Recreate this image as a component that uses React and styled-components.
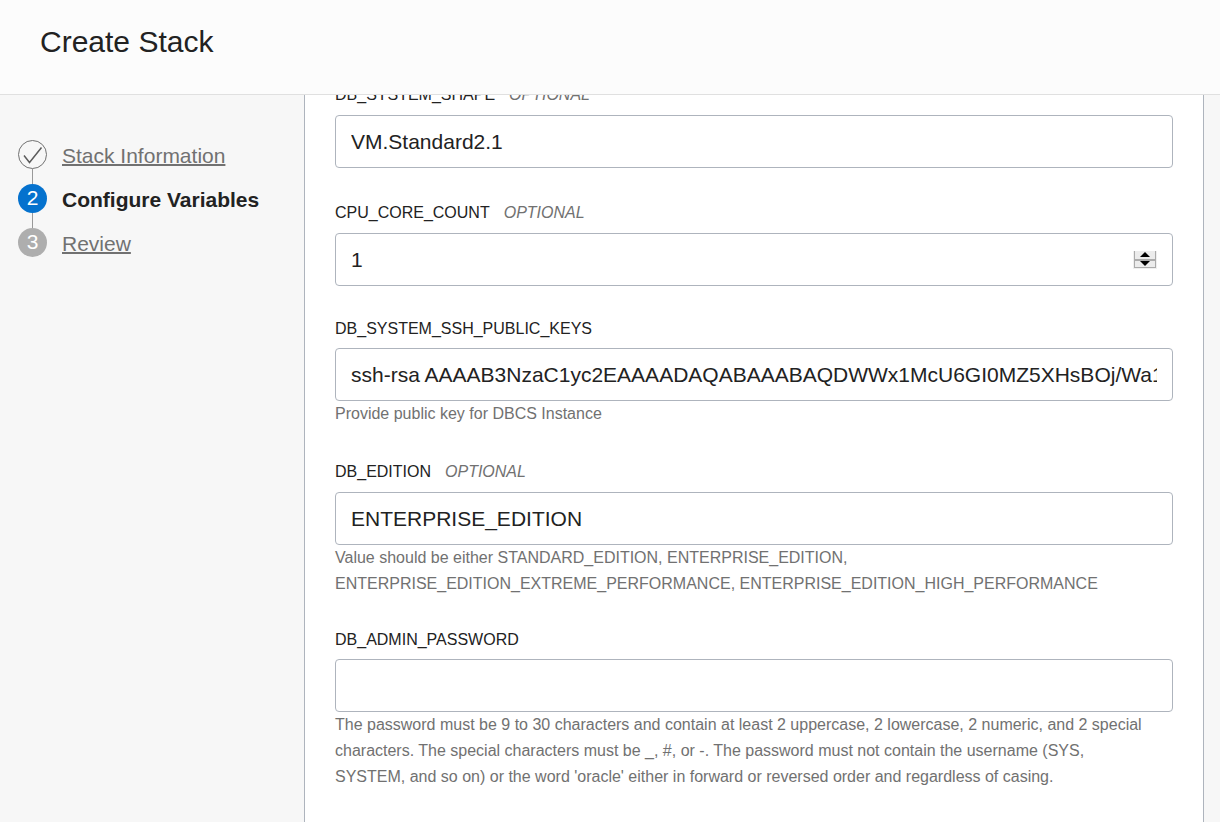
import React, { useLayoutEffect, useRef, useState } from "react";
import styled, { createGlobalStyle, css } from "styled-components";

const Global = createGlobalStyle`
  * { box-sizing: border-box; }
  body {
    margin: 0;
    background: #f7f7f7;
    color: #222222;
    font-family: "Liberation Sans", Arial, sans-serif;
  }
`;

const Shell = styled.div`
  height: 100vh;
  display: flex;
  flex-direction: column;
`;

const Header = styled.header`
  flex: none;
  padding: 24px 40px 34px;
  background: #fcfcfc;
  border-bottom: 1px solid #e0e0e0;
`;

const Title = styled.h1`
  margin: 0;
  font-size: 30px;
  line-height: 36px;
  font-weight: 400;
`;

const Body = styled.div`
  flex: 1;
  min-height: 0;
  display: grid;
  grid-template-columns: 304px minmax(0, 1fr);
  padding-right: 16px;
`;

const Steps = styled.ol`
  list-style: none;
  margin: 0;
  padding: 45px 18px;
`;

const Step = styled.li`
  display: flex;
  gap: 15px;
`;

const Rail = styled.div`
  display: flex;
  flex-direction: column;
  align-items: center;
`;

const markerLooks = {
  done: css`border: 1px solid #717171; color: #5c5c5c;`,
  current: css`background: #0572ce; color: #ffffff; padding-bottom: 2px;`,
  upcoming: css`background: #aeaeae; color: #ffffff; padding-bottom: 2px;`,
};

const Marker = styled.span`
  width: 29px;
  height: 29px;
  border-radius: 50%;
  display: flex;
  align-items: center;
  justify-content: center;
  font-size: 21px;
  line-height: 26px;
  ${(p) => markerLooks[p.$state]}
`;

const Connector = styled.span`
  width: 1px;
  height: 15px;
  background: #999999;
`;

const StepLink = styled.a`
  font-size: 21px;
  line-height: 32px;
  color: ${(p) => (p.$current ? "#222222" : "#717171")};
  font-weight: ${(p) => (p.$current ? 700 : 400)};
  text-decoration: ${(p) => (p.$current ? "none" : "underline")};
  text-decoration-thickness: 2px;
`;

const Scroller = styled.main`
  overflow-y: auto;
  scrollbar-width: none;
  background: #ffffff;
  border: solid #aeb4bd;
  border-width: 0 1px;
`;

const Form = styled.form`
  display: flex;
  flex-direction: column;
  gap: 30px;
  padding: 30px 30px 90px;
`;

const Field = styled.div`
  display: flex;
  flex-direction: column;
`;

const LabelRow = styled.div`
  display: flex;
  align-items: center;
  gap: 14px;
  height: ${(p) => (p.$optional ? 29 : 26)}px;
  margin-bottom: 6px;
  font-size: 16px;
`;

const Optional = styled.em`
  color: #717171;
`;

const Control = styled.div`
  display: flex;
  align-items: center;
  height: 53px;
  padding: 0 15px;
  border: 1px solid #aeb4bd;
  border-radius: 4px;
  background: #ffffff;
`;

const Input = styled.input`
  flex: 1;
  min-width: 0;
  height: 100%;
  padding: 0;
  border: 0;
  outline: 0;
  background: transparent;
  color: inherit;
  font: inherit;
  font-size: 21px;
  appearance: textfield;
  &::-webkit-inner-spin-button { appearance: none; }
`;

const Spinner = styled.div`
  display: flex;
  flex-direction: column;
  border: solid #efefef;
  border-width: 0 1px 1px;
`;

const SpinButton = styled.button`
  width: 22px;
  height: ${(p) => (p.$down ? 8 : 9)}px;
  padding: 0;
  display: flex;
  justify-content: center;
  align-items: center;
  border: solid #ababab;
  border-width: ${(p) => (p.$down ? "1px" : "0 1px 1px")};
  background: #ececec;
`;

const ArrowIcon = styled.svg`
  flex: none;
  display: block;
`;

const Hint = styled.p`
  margin: 0;
  padding-right: 20px;
  color: #717171;
  font-size: 16px;
  line-height: 26px;
`;

const steps = [
  { label: "Stack Information", state: "done" },
  { label: "Configure Variables", state: "current" },
  { label: "Review", state: "upcoming" },
];

const fields = [
  { name: "DB_SYSTEM_SHAPE", optional: true, value: "VM.Standard2.1" },
  { name: "CPU_CORE_COUNT", optional: true, value: "1", type: "number" },
  {
    name: "DB_SYSTEM_SSH_PUBLIC_KEYS",
    value: "ssh-rsa AAAAB3NzaC1yc2EAAAADAQABAAABAQDWWx1McU6GI0MZ5XHsBOj/Wa1",
    hint: "Provide public key for DBCS Instance",
  },
  {
    name: "DB_EDITION",
    optional: true,
    value: "ENTERPRISE_EDITION",
    hint: "Value should be either STANDARD_EDITION, ENTERPRISE_EDITION, ENTERPRISE_EDITION_EXTREME_PERFORMANCE, ENTERPRISE_EDITION_HIGH_PERFORMANCE",
  },
  {
    name: "DB_ADMIN_PASSWORD",
    value: "",
    type: "password",
    hint: "The password must be 9 to 30 characters and contain at least 2 uppercase, 2 lowercase, 2 numeric, and 2 special characters. The special characters must be _, #, or -. The password must not contain the username (SYS, SYSTEM, and so on) or the word 'oracle' either in forward or reversed order and regardless of casing.",
  },
];

function CheckIcon() {
  return (
    <svg width="27" height="27" viewBox="0 0 27 27" fill="none" stroke="currentColor" strokeWidth="1.5" aria-hidden="true">
      <path d="M5 14.5 L10.5 21.5 L22.5 6.5" />
    </svg>
  );
}

function Arrow({ down }) {
  return (
    <ArrowIcon width="10" height="5" viewBox="0 0 10 5" aria-hidden="true">
      <path d={down ? "M0 0H10L5 5Z" : "M0 5H10L5 0Z"} fill="#000000" />
    </ArrowIcon>
  );
}

function VariableField({ name, optional, value: initial, type = "text", hint }) {
  const [value, setValue] = useState(initial);
  const step = (n) => setValue((v) => String(Number(v) + n));
  return (
    <Field>
      <LabelRow $optional={optional}>
        <label htmlFor={name}>{name}</label>
        {optional && <Optional>OPTIONAL</Optional>}
      </LabelRow>
      <Control>
        <Input
          id={name}
          type={type}
          value={value}
          autoComplete="off"
          aria-describedby={hint ? `${name}-hint` : undefined}
          onChange={(e) => setValue(e.target.value)}
        />
        {type === "number" && (
          <Spinner>
            <SpinButton type="button" aria-label="Increase" onClick={() => step(1)}>
              <Arrow />
            </SpinButton>
            <SpinButton $down type="button" aria-label="Decrease" onClick={() => step(-1)}>
              <Arrow down />
            </SpinButton>
          </Spinner>
        )}
      </Control>
      {hint && <Hint id={`${name}-hint`}>{hint}</Hint>}
    </Field>
  );
}

export default function App() {
  const scroller = useRef(null);

  // Opens with the form already scrolled to the database variables.
  useLayoutEffect(() => {
    scroller.current.scrollTop = 45;
  }, []);

  return (
    <Shell>
      <Global />
      <Header>
        <Title>Create Stack</Title>
      </Header>
      <Body>
        <nav aria-label="Steps">
          <Steps>
            {steps.map((s, i) => (
              <Step key={s.label}>
                <Rail>
                  <Marker $state={s.state}>{s.state === "done" ? <CheckIcon /> : i + 1}</Marker>
                  {i < steps.length - 1 && <Connector />}
                </Rail>
                <StepLink href="#" $current={s.state === "current"} aria-current={s.state === "current" ? "step" : undefined}>
                  {s.label}
                </StepLink>
              </Step>
            ))}
          </Steps>
        </nav>
        <Scroller ref={scroller}>
          <Form onSubmit={(e) => e.preventDefault()}>
            {fields.map((f) => (
              <VariableField key={f.name} {...f} />
            ))}
          </Form>
        </Scroller>
      </Body>
    </Shell>
  );
}
